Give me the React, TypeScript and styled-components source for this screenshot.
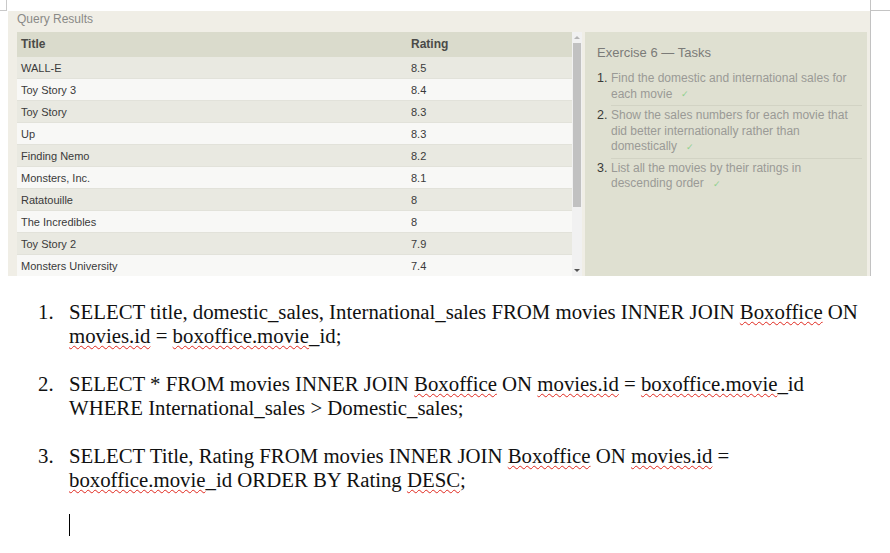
import React from "react";
import styled, { createGlobalStyle } from "styled-components";

const GlobalStyle = createGlobalStyle`
  html, body { margin: 0; padding: 0; background: #ffffff; }
  body { font-family: "Liberation Sans", Arial, sans-serif; }
`;

const Page = styled.div`
  width: 890px;
  height: 553px;
  overflow: hidden;
  background: #fff;
`;

const TopStrip = styled.div`
  display: flex;
  height: 11px;
`;

const CornerLeft = styled.div`
  width: 7px;
  height: 11px;
  box-sizing: border-box;
  border-right: 1px solid #c9c9c9;
  border-bottom: 1px solid #c9c9c9;
`;

const CornerRight = styled.div`
  margin-left: auto;
  width: 20px;
  height: 11px;
  box-sizing: border-box;
  border-left: 1px solid #c4c4c4;
  border-bottom: 1px solid #c4c4c4;
`;

const Shot = styled.div`
  box-sizing: border-box;
  margin-left: 8px;
  width: 863px;
  height: 265px;
  background: #f0eee6;
  border-right: 1px solid #c2c2c2;
  padding: 0 3px 0 9px;
  display: flex;
  flex-direction: column;
  overflow: hidden;
`;

const ShotTitle = styled.div`
  height: 21px;
  line-height: 14px;
  font-size: 12px;
  color: #8a8a86;
  padding-top: 1px;
  box-sizing: border-box;
`;

const Content = styled.div`
  display: flex;
  gap: 3px;
  flex: 1;
  min-height: 0;
`;

const TableArea = styled.div`
  display: flex;
  width: 565px;
  flex-shrink: 0;
  overflow: hidden;
`;

const Table = styled.div`
  width: 555px;
  display: flex;
  flex-direction: column;
`;

const Row = styled.div<{ $kind: "head" | "odd" | "even" }>`
  display: grid;
  grid-template-columns: 390px 1fr;
  flex-shrink: 0;
  box-sizing: border-box;
  height: ${(p) => (p.$kind === "head" ? "25px" : "22px")};
  padding-bottom: ${(p) => (p.$kind === "head" ? "1px" : "0")};
  padding-top: ${(p) => (p.$kind === "head" ? "0" : "1px")};
  align-items: center;
  padding-left: 4px;
  background: ${(p) =>
    p.$kind === "head" ? "#dadbcc" : p.$kind === "odd" ? "#e9e9e1" : "#f8f8f6"};
  border-bottom: 1px solid ${(p) => (p.$kind === "head" ? "#dadbcc" : "#e2e2da")};
  font-size: ${(p) => (p.$kind === "head" ? "12px" : "11px")};
  font-weight: ${(p) => (p.$kind === "head" ? 700 : 400)};
  color: ${(p) => (p.$kind === "head" ? "#4a4a48" : "#3a3a3a")};
`;

const Cell = styled.div`
  white-space: nowrap;
`;

const ScrollBar = styled.div`
  width: 10px;
  background: #f1f1f1;
  display: flex;
  flex-direction: column;
  align-items: center;
  flex-shrink: 0;
`;

const ScrollArrow = styled.div<{ $down?: boolean }>`
  height: 11px;
  display: flex;
  align-items: center;
  justify-content: center;
  flex-shrink: 0;
  &::after {
    content: "";
    border-left: 3px solid transparent;
    border-right: 3px solid transparent;
    ${(p) =>
      p.$down ? "border-top: 3px solid #555;" : "border-bottom: 3px solid #b5b5b5;"}
  }
`;

const Thumb = styled.div`
  width: 8px;
  height: 164px;
  background: #c1c1c1;
  flex-shrink: 0;
`;

const ScrollSpacer = styled.div`
  flex: 1;
`;

const TaskPanel = styled.div`
  width: 282px;
  flex-shrink: 0;
  background: #dfe0d1;
  box-sizing: border-box;
  padding: 13px 5px 0 12px;
`;

const TaskTitle = styled.div`
  font-size: 13px;
  line-height: 16px;
  color: #7b7b78;
  margin-bottom: 10px;
`;

const TaskList = styled.div`
  display: flex;
  flex-direction: column;
`;

const TaskItem = styled.div`
  display: grid;
  grid-template-columns: 14px 1fr;
  font-size: 12px;
  line-height: 15.5px;
`;

const TaskNum = styled.div<{ $first?: boolean }>`
  color: #3a3a38;
  font-size: 12.5px;
  padding-top: ${(p) => (p.$first ? "0" : "2px")};
`;

const TaskBody = styled.div<{ $first?: boolean; $last?: boolean }>`
  color: #9a9a96;
  padding: ${(p) => (p.$first ? "0" : "2px")} 0 3px;
  border-bottom: ${(p) => (p.$last ? "none" : "1px solid #d2d3c4")};
`;

const TaskLine = styled.div`
  height: 15.5px;
  white-space: nowrap;
`;

const Check = styled.span`
  display: inline-block;
  line-height: 0;
  vertical-align: middle;
  color: #8fd18f;
  font-size: 9px;
  margin-left: 9px;
`;

const Doc = styled.div`
  padding-top: 24px;
  font-family: "Liberation Serif", "Times New Roman", serif;
  font-size: 20.8px;
  line-height: 24px;
  color: #111;
`;

const DocItem = styled.div`
  display: grid;
  grid-template-columns: 38px 31px 1fr;
  margin-bottom: 24px;
`;

const DocNum = styled.div`
  grid-column: 2;
  white-space: nowrap;
`;

const DocText = styled.div`
  grid-column: 3;
`;

const Line = styled.div`
  white-space: nowrap;
`;

const Misspelled = styled.span`
  text-decoration: underline wavy #e0281e;
  text-decoration-thickness: 1px;
  text-underline-offset: 2px;
  text-decoration-skip-ink: none;
`;

const Caret = styled.div`
  margin-left: 69px;
  margin-top: -2px;
  width: 1px;
  height: 22px;
  background: #000;
`;

const rows: [string, string][] = [
  ["WALL-E", "8.5"],
  ["Toy Story 3", "8.4"],
  ["Toy Story", "8.3"],
  ["Up", "8.3"],
  ["Finding Nemo", "8.2"],
  ["Monsters, Inc.", "8.1"],
  ["Ratatouille", "8"],
  ["The Incredibles", "8"],
  ["Toy Story 2", "7.9"],
  ["Monsters University", "7.4"],
];

const tasks: string[][] = [
  ["Find the domestic and international sales for", "each movie"],
  ["Show the sales numbers for each movie that", "did better internationally rather than", "domestically"],
  ["List all the movies by their ratings in", "descending order"],
];

export default function App() {
  return (
    <Page>
      <GlobalStyle />
      <TopStrip>
        <CornerLeft />
        <CornerRight />
      </TopStrip>
      <Shot>
        <ShotTitle>Query Results</ShotTitle>
        <Content>
          <TableArea>
            <Table>
              <Row $kind="head">
                <Cell>Title</Cell>
                <Cell>Rating</Cell>
              </Row>
              {rows.map(([t, r], i) => (
                <Row key={t + i} $kind={i % 2 === 0 ? "odd" : "even"}>
                  <Cell>{t}</Cell>
                  <Cell>{r}</Cell>
                </Row>
              ))}
            </Table>
            <ScrollBar>
              <ScrollArrow />
              <Thumb />
              <ScrollSpacer />
              <ScrollArrow $down />
            </ScrollBar>
          </TableArea>
          <TaskPanel>
            <TaskTitle>Exercise 6 — Tasks</TaskTitle>
            <TaskList>
              {tasks.map((lines, i) => (
                <TaskItem key={i}>
                  <TaskNum $first={i === 0}>{i + 1}.</TaskNum>
                  <TaskBody $first={i === 0} $last={i === tasks.length - 1}>
                    {lines.map((l, j) => (
                      <TaskLine key={j}>
                        {l}
                        {j === lines.length - 1 && <Check>✓</Check>}
                      </TaskLine>
                    ))}
                  </TaskBody>
                </TaskItem>
              ))}
            </TaskList>
          </TaskPanel>
        </Content>
      </Shot>
      <Doc>
        <DocItem>
          <DocNum>1.</DocNum>
          <DocText>
            <Line>
              SELECT title, domestic_sales, International_sales FROM movies INNER JOIN{" "}
              <Misspelled>Boxoffice</Misspelled> ON
            </Line>
            <Line>
              <Misspelled>movies.id</Misspelled> = <Misspelled>boxoffice.movie</Misspelled>_id;
            </Line>
          </DocText>
        </DocItem>
        <DocItem>
          <DocNum>2.</DocNum>
          <DocText>
            <Line>
              SELECT * FROM movies INNER JOIN <Misspelled>Boxoffice</Misspelled> ON{" "}
              <Misspelled>movies.id</Misspelled> = <Misspelled>boxoffice.movie</Misspelled>_id
            </Line>
            <Line>WHERE International_sales &gt; Domestic_sales;</Line>
          </DocText>
        </DocItem>
        <DocItem>
          <DocNum>3.</DocNum>
          <DocText>
            <Line>
              SELECT Title, Rating FROM movies INNER JOIN <Misspelled>Boxoffice</Misspelled> ON{" "}
              <Misspelled>movies.id</Misspelled> =
            </Line>
            <Line>
              <Misspelled>boxoffice.movie</Misspelled>_id ORDER BY Rating <Misspelled>DESC</Misspelled>;
            </Line>
          </DocText>
        </DocItem>
        <Caret />
      </Doc>
    </Page>
  );
}
